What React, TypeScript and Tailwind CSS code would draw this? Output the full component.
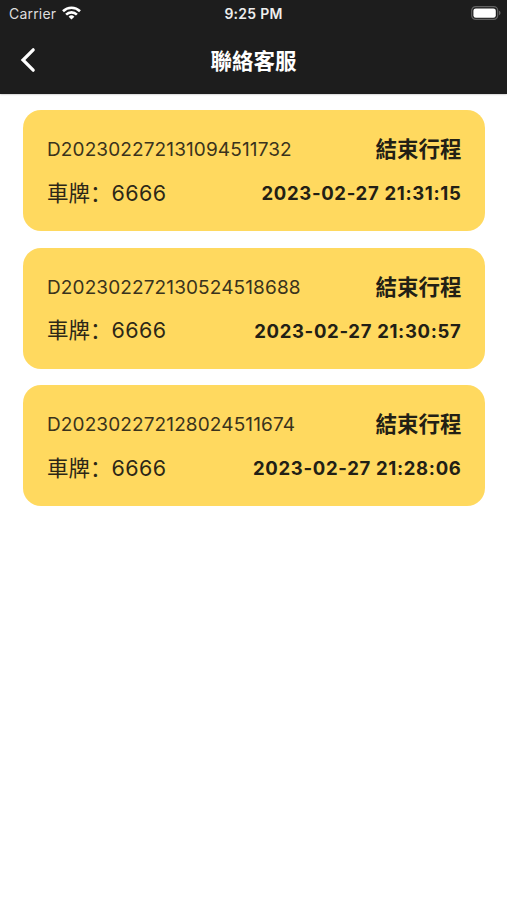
import React from 'react';

const trips = [
  { id: 'D202302272131094511732', plate: '6666', time: '2023-02-27 21:31:15' },
  { id: 'D202302272130524518688', plate: '6666', time: '2023-02-27 21:30:57' },
  { id: 'D202302272128024511674', plate: '6666', time: '2023-02-27 21:28:06' },
];

const StatusBar = () => (
  <div className="grid h-7 grid-cols-3 items-center text-[14px] leading-7 text-[#eee]">
    <div className="flex items-center gap-1.5 pl-[9px]">
      <span className="tracking-[0.2px] text-[#ddd]">Carrier</span>
      <svg className="-mt-[3px]" width="19" height="14" viewBox="0 0 19 14" fill="none" stroke="white" strokeWidth="2.6">
        <path d="M1 5.2a12.2 12.2 0 0 1 17 0" />
        <path d="M4.1 8.6a7.7 7.7 0 0 1 10.8 0" />
        <path d="M9.5 13.6 6.6 10.7a4.1 4.1 0 0 1 5.8 0z" fill="white" stroke="none" />
      </svg>
    </div>
    <span className="text-center font-semibold tracking-[0.25px]">9:25 PM</span>
    <div className="flex justify-end pr-1.5">
      <svg className="-mt-0.5" width="30" height="14" viewBox="0 0 30 14">
        <rect x="0.7" y="0.6" width="26" height="12.8" rx="4" fill="none" stroke="#626262" strokeWidth="1.2" />
        <rect x="2.4" y="2.4" width="22.4" height="9.4" rx="2.4" fill="white" />
        <path d="M28 4.8c2 .6 2 3.8 0 4.4z" fill="#626262" />
      </svg>
    </div>
  </div>
);

const App = () => {
  return (
    <div className="min-h-screen bg-white font-['Inter','Noto_Sans_CJK_TC',sans-serif] text-[#222015]">
      <header className="h-[93.5px] bg-[#1d1d1d] shadow-[0_0_2px_rgba(0,0,0,0.4)]">
        <StatusBar />
        <div className="grid h-[65px] grid-cols-3 items-center text-white">
          <svg className="mb-0.5 ml-5" width="16" height="26" viewBox="0 0 16 26" fill="none" stroke="white" strokeWidth="3.2" strokeLinecap="round">
            <path d="M13.2 2.8 3 13l10.2 10.2" />
          </svg>
          <h1 className="pt-px text-center text-[21.5px] font-bold">聯絡客服</h1>
        </div>
      </header>
      <main className="flex flex-col gap-[16.5px] px-[22.5px] pt-[16.5px]">
        {trips.map((trip) => (
          <section key={trip.id} className="flex h-[121px] flex-col rounded-[18px] bg-[#ffd95f] pt-[17px] pr-[23px] pl-[24.5px]">
            <div className="flex h-11 items-center justify-between">
              <span className="pt-[3px] text-[19px] tracking-[0.12px] text-[#3a331c]">{trip.id}</span>
              <span className="pt-px text-[21.5px] font-bold">結束行程</span>
            </div>
            <div className="flex h-11 items-center justify-between">
              <span className="flex items-center text-[21.5px] text-[#2c2717]">
                車牌<span className="-mt-0.5 font-['Noto_Sans_CJK_SC',sans-serif]" lang="zh-CN">：</span>
                <span className="tracking-[0.4px]">{trip.plate}</span>
              </span>
              <span className="pt-0.5 text-[18.5px] font-bold tracking-[0.67px]">{trip.time}</span>
            </div>
          </section>
        ))}
      </main>
    </div>
  );
};

export default App;
